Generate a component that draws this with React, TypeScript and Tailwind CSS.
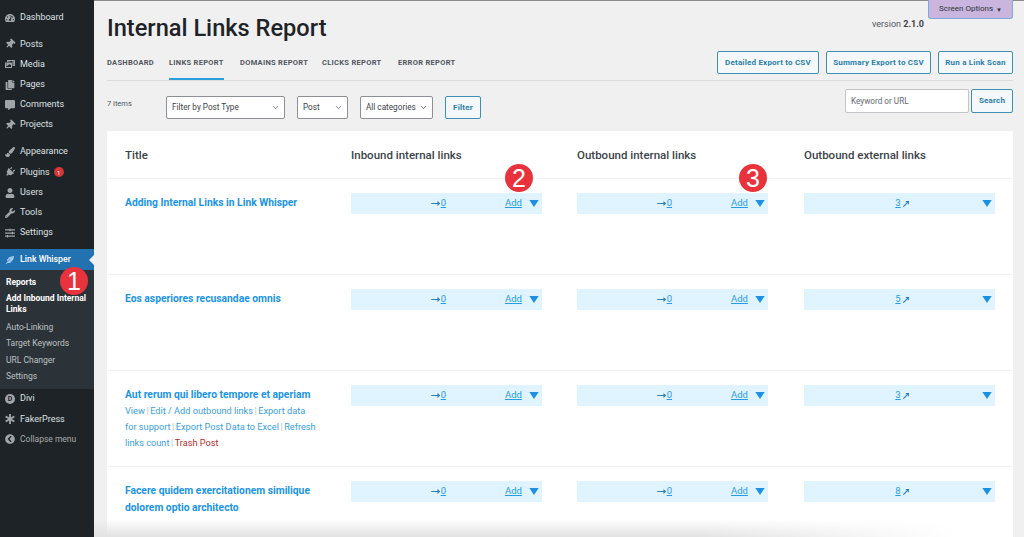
import { MoveRight, MoveUpRight, ChevronDown } from 'lucide-react'
import {
  FaTachometerAlt,
  FaThumbtack,
  FaPhotoVideo,
  FaCopy,
  FaCommentAlt,
  FaPaintBrush,
  FaPlug,
  FaUser,
  FaWrench,
  FaSlidersH,
  FaFeatherAlt,
  FaStarOfLife,
  FaChevronCircleLeft,
} from 'react-icons/fa'

const font = { fontFamily: 'Roboto, "Noto Sans", sans-serif' }

const MenuItem = ({ icon: Icon, label, badge, tilt }: any) => (
  <div className="flex h-[20.2px] items-center pl-[5px] text-[9px] text-[#dfe1e3]">
    <Icon className={`mr-[5px] h-[10px] w-[10px] text-[#a0a5aa] ${tilt ? 'rotate-45' : ''}`} />
    <span>{label}</span>
    {badge && (
      <span className="ml-[4px] flex h-[10px] w-[10px] items-center justify-center rounded-full bg-[#d63638] text-[6px] text-white">
        {badge}
      </span>
    )}
  </div>
)

const Sidebar = () => (
  <aside className="w-[94px] shrink-0 bg-[#1d2327] pt-[8px]">
    <MenuItem icon={FaTachometerAlt} label="Dashboard" />
    <div className="mt-[6px]">
      <MenuItem icon={FaThumbtack} label="Posts" tilt />
      <MenuItem icon={FaPhotoVideo} label="Media" />
      <MenuItem icon={FaCopy} label="Pages" />
      <MenuItem icon={FaCommentAlt} label="Comments" />
      <MenuItem icon={FaThumbtack} label="Projects" tilt />
    </div>
    <div className="mt-[7px]">
      <MenuItem icon={FaPaintBrush} label="Appearance" />
      <MenuItem icon={FaPlug} label="Plugins" badge="1" tilt />
      <MenuItem icon={FaUser} label="Users" />
      <MenuItem icon={FaWrench} label="Tools" />
      <MenuItem icon={FaSlidersH} label="Settings" />
    </div>
    <div className="relative mt-[6px] flex h-[21px] items-center bg-[#2271b1] pl-[6px] text-[8.8px] font-medium text-white">
      <FaFeatherAlt className="mr-[6px] h-[8px] w-[8px] text-[#9ec9ee]" />
      <span>Link Whisper</span>
      <span className="absolute right-0 top-[6px] h-0 w-0 border-y-[5px] border-r-[5px] border-y-transparent border-r-[#f0f0f0]" />
    </div>
    <div className="flex h-[119px] flex-col bg-[#2c3338] pl-[6px] pt-[4px] text-[8.5px] text-[#bcc0c4]">
      <div className="h-[16.5px] leading-[16px] font-bold text-white">Reports</div>
      <div className="h-[28px] pt-[2px] leading-[11px] font-bold text-white">
        Add Inbound Internal
        <br />
        Links
      </div>
      <div className="h-[16.5px] leading-[16px]">Auto-Linking</div>
      <div className="h-[16.5px] leading-[16px]">Target Keywords</div>
      <div className="h-[16.5px] leading-[16px]">URL Changer</div>
      <div className="h-[16.5px] leading-[16px]">Settings</div>
    </div>
    <div className="flex h-[20.2px] items-center pl-[5px] text-[9px] text-[#dfe1e3]">
      <span className="mr-[5px] flex h-[10px] w-[10px] items-center justify-center rounded-full bg-[#a0a5aa] text-[7px] font-bold text-[#1d2327]">
        D
      </span>
      <span>Divi</span>
    </div>
    <MenuItem icon={FaStarOfLife} label="FakerPress" />
    <div className="flex h-[20px] items-center pl-[5px] text-[8.5px] text-[#a7aaad]">
      <FaChevronCircleLeft className="mr-[5px] h-[10px] w-[10px] text-[#a0a5aa]" />
      <span>Collapse menu</span>
    </div>
  </aside>
)

const Select = ({ label, width }: { label: string; width: string }) => (
  <div
    className={`flex h-[23px] items-center justify-between rounded-[2px] border border-[#8c8f94] bg-white pl-[5px] pr-[4px] text-[8.2px] text-[#3c434a] ${width}`}
  >
    <span>{label}</span>
    <ChevronDown className="h-[9px] w-[9px] text-[#50575e]" />
  </div>
)

const OutlineButton = ({ label, className }: { label: string; className: string }) => (
  <div
    className={`flex items-center justify-center rounded-[2px] border border-[#3f8fb5] bg-[#f4f8fa] text-[8px] font-bold tracking-[0.2px] text-[#2b7fa9] ${className}`}
  >
    {label}
  </div>
)

const Caret = () => (
  <svg viewBox="0 0 12 9" className="h-[7px] w-[10px] fill-[#1e90e0]">
    <path d="M0 0h12L6 9z" />
  </svg>
)

const InternalBar = () => (
  <div className="flex h-[21px] w-[191px] items-center bg-[#dff4ff] text-[9.5px] text-[#2a9be0]">
    <div className="flex w-[95px] items-center justify-end">
      <MoveRight className="mr-[1px] h-[9px] w-[9px] text-[#2a7fc0]" strokeWidth={3} />
      <span className="underline">0</span>
    </div>
    <span className="ml-[59px] underline">Add</span>
    <span className="ml-[7px]">
      <Caret />
    </span>
  </div>
)

const ExternalBar = ({ count }: { count: number }) => (
  <div className="flex h-[21px] w-[191px] items-center bg-[#dff4ff] pr-[3px] text-[9.5px] text-[#2a9be0]">
    <div className="flex flex-1 items-center justify-center pl-[19px]">
      <span className="underline">{count}</span>
      <MoveUpRight className="ml-[1px] h-[8px] w-[8px] text-[#2a7fc0]" strokeWidth={3.5} />
    </div>
    <Caret />
  </div>
)

const Row = ({ title, count, actions }: any) => (
  <div className="grid h-[96px] grid-cols-[244px_226px_227px_1fr] border-t border-[#f3f3f3] pt-[14px]">
    <div className="pl-[18px] pr-[20px] pt-[1px]">
      <div className="text-[10.3px] leading-[17px] font-bold text-[#1a94e6]">{title}</div>
      {actions}
    </div>
    <InternalBar />
    <InternalBar />
    <ExternalBar count={count} />
  </div>
)

const Sep = () => <span className="mx-[1.5px] text-[#c3c4c7]">|</span>

const RowActions = () => (
  <div className="whitespace-nowrap text-[9.2px] leading-[16px] text-[#3aa0de]">
    View
    <Sep />
    Edit / Add outbound links
    <Sep />
    Export data
    <br />
    for support
    <Sep />
    Export Post Data to Excel
    <Sep />
    Refresh
    <br />
    links count
    <Sep />
    <span className="text-[#b32d2e]">Trash Post</span>
  </div>
)

const Marker = ({ n, className }: { n: number; className: string }) => (
  <div
    className={`absolute flex h-[28px] w-[28px] items-center justify-center rounded-full bg-[#e8333d] text-[25px] leading-none text-white ${className}`}
    style={{ fontFamily: '"Liberation Sans", sans-serif' }}
  >
    {n}
  </div>
)

const tabs = [
  { label: 'DASHBOARD', w: 'w-[46px]' },
  { label: 'LINKS REPORT', w: 'w-[55px]', active: true },
  { label: 'DOMAINS REPORT', w: 'w-[66px]' },
  { label: 'CLICKS REPORT', w: 'w-[60px]' },
  { label: 'ERROR REPORT', w: 'w-[57px]' },
]

export default function App() {
  return (
    <div className="relative flex h-[537px] w-[1024px] overflow-hidden bg-[#f0f0f0]" style={font}>
      <Sidebar />
      <main className="flex min-w-0 flex-1 flex-col border-t border-[#8a8a8a] pl-[13px] pr-[11px]">
        <div className="flex h-[50px] shrink-0 items-start justify-between">
          <h1 className="mt-[9px] text-[23.6px] leading-[36px] font-medium text-[#1d2327]">
            Internal Links Report
          </h1>
          <div className="mr-[89px] mt-[17px] text-[9px] leading-[12px] text-[#50575e]">
            version <span className="font-bold text-[#3c434a]">2.1.0</span>
          </div>
        </div>

        <div className="flex h-[30px] shrink-0 justify-between border-b border-[#dcdcde]">
          <div className="flex gap-[16px]">
            {tabs.map((tab) => (
              <div
                key={tab.label}
                className={`${tab.w} h-[29px] whitespace-nowrap pt-[6px] text-[7.5px] leading-[12px] font-bold tracking-[0.3px] text-[#50575e] ${
                  tab.active ? 'border-b-2 border-[#2b9fdc]' : ''
                }`}
              >
                {tab.label}
              </div>
            ))}
          </div>
          <div className="flex h-[23px] gap-[7px]">
            <OutlineButton label="Detailed Export to CSV" className="w-[102px]" />
            <OutlineButton label="Summary Export to CSV" className="w-[105px]" />
            <OutlineButton label="Run a Link Scan" className="w-[75px]" />
          </div>
        </div>

        <div className="flex h-[50px] shrink-0 items-start justify-between">
          <div className="mt-[15px] flex items-start">
            <span className="mt-[2px] w-[59px] text-[7.5px] leading-[12px] text-[#50575e]">7 items</span>
            <Select label="Filter by Post Type" width="w-[119px]" />
            <Select label="Post" width="ml-[12px] w-[51px]" />
            <Select label="All categories" width="ml-[12px] w-[73px]" />
            <OutlineButton label="Filter" className="ml-[12px] h-[23px] w-[36px]" />
          </div>
          <div className="mt-[8px] flex gap-[2px]">
            <div className="flex h-[24px] w-[124px] items-center rounded-[2px] border border-[#c3c4c7] bg-white pl-[5px] text-[8.2px] text-[#646970]">
              Keyword or URL
            </div>
            <OutlineButton label="Search" className="h-[24px] w-[42px]" />
          </div>
        </div>

        <div className="flex-1 bg-white">
          <div className="grid h-[47px] grid-cols-[244px_226px_227px_1fr] items-center pt-[3px] text-[11.5px] font-medium text-[#3c434a]">
            <div className="pl-[18px]">Title</div>
            <div>Inbound internal links</div>
            <div>Outbound internal links</div>
            <div>Outbound external links</div>
          </div>
          <Row title="Adding Internal Links in Link Whisper" count={3} />
          <Row title="Eos asperiores recusandae omnis" count={5} />
          <Row title="Aut rerum qui libero tempore et aperiam" count={3} actions={<RowActions />} />
          <Row
            title={
              <>
                Facere quidem exercitationem similique
                <br />
                dolorem optio architecto
              </>
            }
            count={8}
          />
        </div>
      </main>

      <div className="absolute right-0 top-0 mr-[11px] flex h-[19px] w-[85px] items-center justify-center gap-[3px] rounded-b-[3px] border border-t-0 border-[#7fa8e0] bg-[#c9b5dd] text-[8px] text-[#2c3338]">
        Screen Options <span className="text-[6px]">▼</span>
      </div>

      <Marker n={1} className="left-[60px] top-[267px]" />
      <Marker n={2} className="left-[505px] top-[164px]" />
      <Marker n={3} className="left-[739px] top-[164px]" />

      <div className="absolute bottom-0 left-[94px] h-[18px] w-[860px] bg-gradient-to-t from-[#e2e2e2] to-transparent [mask-image:linear-gradient(to_right,black_70%,transparent)]" />
    </div>
  )
}
